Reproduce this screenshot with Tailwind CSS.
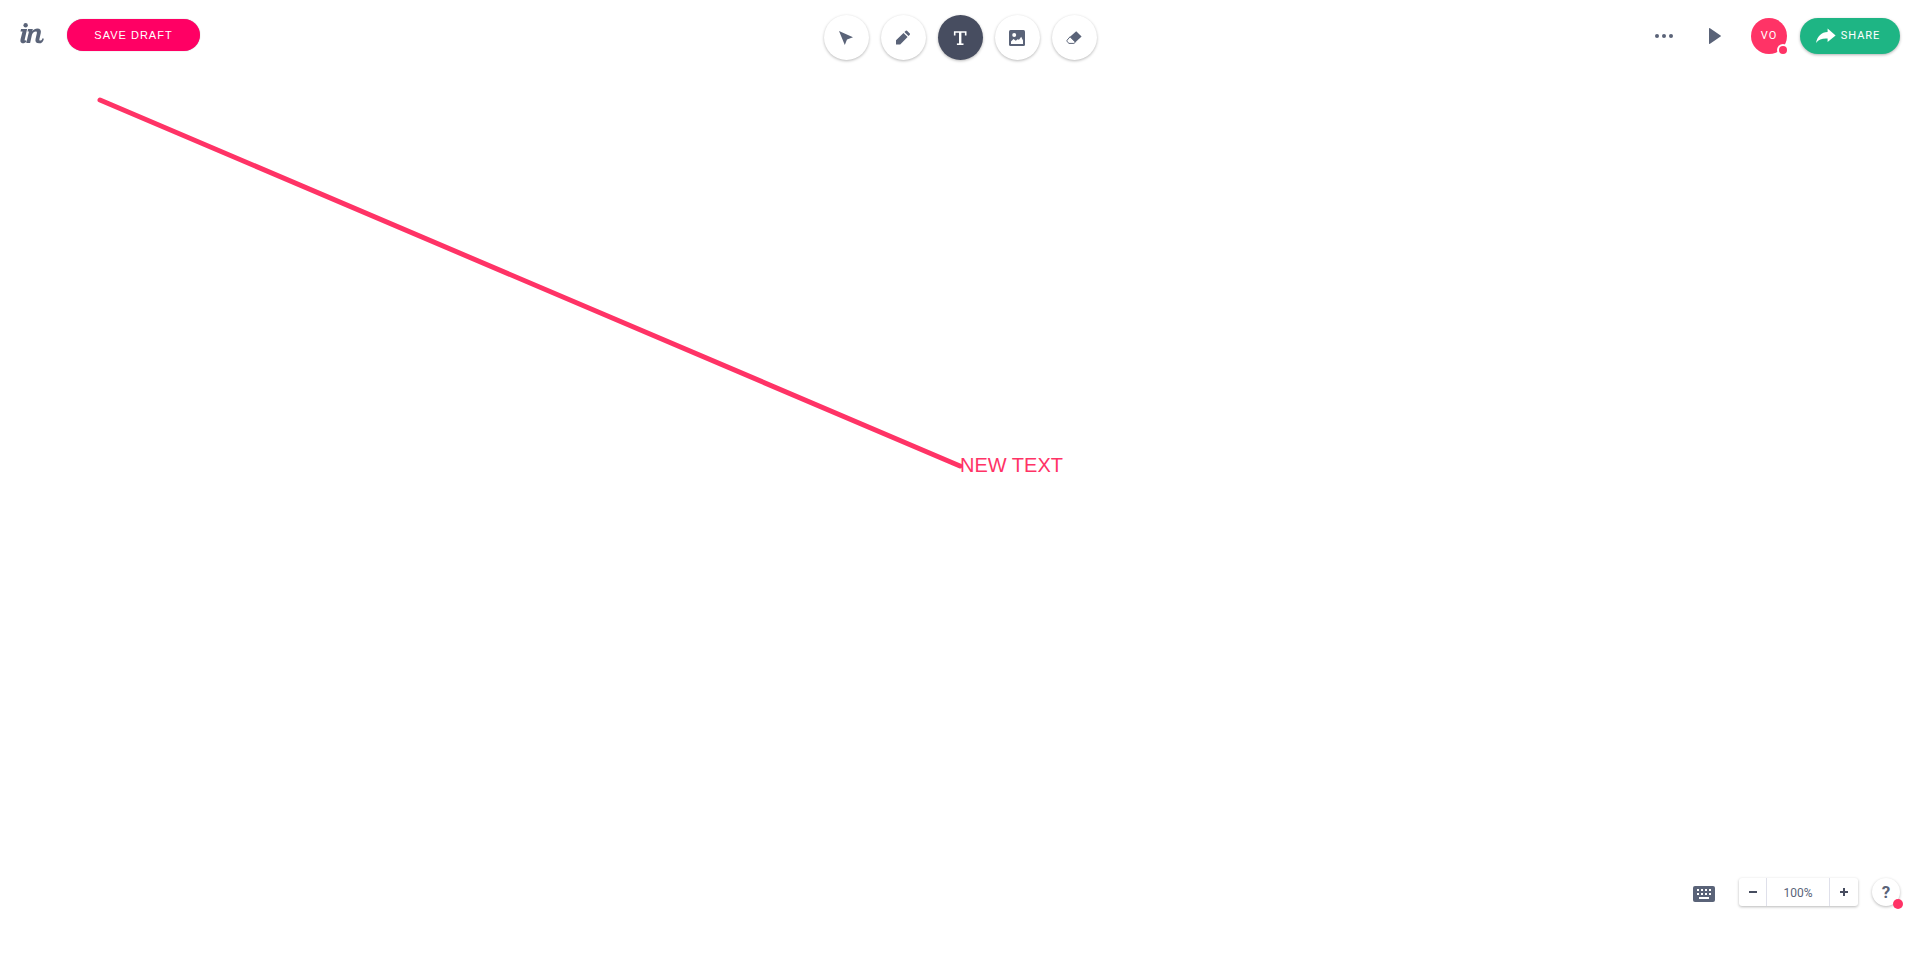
<!DOCTYPE html>
<html lang="en">
<head>
<meta charset="utf-8">
<title>Freehand</title>
<script src="https://cdn.jsdelivr.net/npm/@tailwindcss/browser@4"></script>
</head>
<body class="relative flex min-h-screen flex-col justify-between overflow-hidden bg-white font-['Roboto',sans-serif] text-[#5a6378]">
  <!-- Canvas -->
  <main class="absolute inset-0" aria-label="Canvas">
    <svg class="absolute top-0 left-0 overflow-visible" width="960" height="466" fill="none"><path d="M100 100L960 466" stroke="#ff3366" stroke-width="5" stroke-linecap="round"/></svg>
    <p class="absolute top-[453px] left-[960px] font-['Liberation_Sans',sans-serif] text-[20px] leading-6 whitespace-nowrap text-[#ff3366]">NEW TEXT</p>
  </main>

  <header class="relative grid grid-cols-[1fr_auto_1fr] items-start px-5 pt-[15px]">
    <div class="flex items-center gap-[23px] pt-1">
      <a href="#" aria-label="Home">
        <svg class="mb-[3px] block" width="24" height="21" viewBox="0 0 23 20" preserveAspectRatio="none" fill="#5a6378"><circle cx="5.4" cy="2.1" r="2.1"/><path d="M.5 8L1 5.8H6.8L4.6 15.2C4.3 16.6 4.6 17 5.6 16.4L6.4 17.4C4.8 19.3 3 19.8 1.6 19.1C.3 18.4.2 17 .6 15.3L2.4 8Z"/><path d="M7.2 8L7.7 5.8H12.3L11.8 7.8C13 6.2 14.8 5.3 16.6 5.3C19.4 5.3 20.5 7 19.9 9.6L18.6 15.2C18.3 16.5 18.7 17 19.8 16.7C20.8 16.4 21.2 15.7 21.6 14.5L22.9 14.9C22.3 17.6 20.7 19.4 18.3 19.4C15.5 19.4 14.3 17.8 14.9 15.2L16.1 10C16.4 8.6 16.1 8 15.2 8C13.4 8 11.8 9.6 11.4 11.5L9.7 19.1H6L8.6 8Z"/></svg>
      </a>
      <button class="h-8 w-[133px] rounded-full bg-[#ff0064] font-['Liberation_Sans',sans-serif] text-[11px] leading-4 tracking-[1px] whitespace-nowrap text-white shadow-[0_0_1px_rgba(0,0,0,0.4)]">SAVE DRAFT</button>
    </div>

    <nav class="flex gap-3" aria-label="Tools">
      <button aria-label="Select" class="flex size-[45px] items-center justify-center rounded-full bg-white shadow-[0_1px_3px_rgba(0,0,0,0.28)]">
        <svg width="16" height="16" viewBox="0 0 16 16" fill="#5a6378"><path d="M1 1L15 7.2L9 9.4L6.8 15Z"/></svg>
      </button>
      <button aria-label="Draw" class="flex size-[45px] items-center justify-center rounded-full bg-white shadow-[0_1px_3px_rgba(0,0,0,0.28)]">
        <svg width="16" height="16" viewBox="0 0 16 16" fill="#5a6378"><path d="M1 10.3L8.5 3L12.6 7L5.2 14.6H1ZM9.4 2L10.8.8Q11.4.3 12 .8L14.8 3.6Q15.3 4.2 14.8 4.8L13.5 6.1Z"/></svg>
      </button>
      <button aria-label="Text" aria-pressed="true" class="flex size-[45px] items-center justify-center rounded-full bg-[#474d60] shadow-[0_1px_3px_rgba(0,0,0,0.28)]">
        <svg width="16" height="16" viewBox="0 0 16 16" fill="none" stroke="#fff"><path d="M2.7 5.5V2H13.7V5.5" stroke-width="1.6"/><path d="M8.2 2V14" stroke-width="2.4"/><path d="M4.9 14.2H11.5" stroke-width="1.6"/></svg>
      </button>
      <button aria-label="Image" class="flex size-[45px] items-center justify-center rounded-full bg-white shadow-[0_1px_3px_rgba(0,0,0,0.28)]">
        <svg width="16" height="16" viewBox="0 0 16 16"><rect width="16" height="16" rx="1.5" fill="#5a6378"/><circle cx="5.2" cy="5" r="2" fill="#fff"/><path d="M2 14V11.5L4.5 9L6.8 10.8L8.6 9.2L10 9.8L12.2 6.8L14 10.5V14Z" fill="#fff"/></svg>
      </button>
      <button aria-label="Erase" class="flex size-[45px] items-center justify-center rounded-full bg-white shadow-[0_1px_3px_rgba(0,0,0,0.28)]">
        <svg width="16" height="16" viewBox="0 0 16 16"><path d="M4 6.8L10.2 1.2L15.6 6.4L9.4 12.2Z" fill="#5a6378"/><path d="M4 6.8L1.1 10.2Q.5 11 1.2 11.7L3 13.4H7.9L9.4 12.2Z" fill="#fff" stroke="#5a6378" stroke-width="1"/></svg>
      </button>
    </nav>

    <div class="flex items-center justify-end pt-[3px]">
      <button aria-label="More" class="mr-9 flex h-9 items-center">
        <svg width="18" height="4" viewBox="0 0 18 4" fill="#5a6378"><circle cx="2" cy="2" r="2"/><circle cx="9" cy="2" r="2"/><circle cx="16" cy="2" r="2"/></svg>
      </button>
      <button aria-label="Present" class="mr-[30px] flex h-9 items-center">
        <svg width="12" height="16" viewBox="0 0 12 16" fill="#5a6378"><path d="M0 .8Q0-.4 1 .3L11.6 7.4Q12.3 8 11.6 8.6L1 15.7Q0 16.4 0 15.2Z"/></svg>
      </button>
      <button class="relative mr-[13px] size-9 overflow-hidden">
        <span class="flex size-9 items-center justify-center rounded-full bg-[#ff3366] text-[11px] tracking-[1px] text-white">VO</span>
        <span class="absolute -right-[2px] -bottom-[2px] size-3 rounded-full bg-white"></span>
        <span class="absolute right-0 bottom-0 size-2 rounded-full bg-[#ff3366]"></span>
      </button>
      <button class="flex h-9 w-[100px] items-center justify-center gap-[5px] rounded-full bg-[#1eb584] pr-1 text-[11px] tracking-[1px] text-white shadow-[0_1px_3px_rgba(0,0,0,0.3)]">
        <svg width="20" height="16" viewBox="0 0 20 16" fill="#fff"><path d="M0 15C1.5 8 5.5 4.3 11.6 4V.6L19.6 7.4L11.6 14V10.6C6.5 10.3 3 11.2 0 15Z"/></svg>
        SHARE
      </button>
    </div>
  </header>

  <footer class="relative flex items-center justify-end px-5 pb-[61px]">
    <button aria-label="Keyboard shortcuts" class="mr-6 pt-1">
      <svg class="block" width="22" height="16" viewBox="0 0 22 16"><rect width="22" height="16" rx="2" fill="#5a6378"/><path d="M4 4H18M4 8H18" stroke="#fff" stroke-width="2" stroke-dasharray="2 2"/><path d="M6 12H16" stroke="#fff" stroke-width="2"/></svg>
    </button>
    <div class="mr-[14px] flex h-7 divide-x divide-[#dfe0ea] rounded-[3px] bg-white shadow-[0_1px_3px_rgba(0,0,0,0.28)]">
      <button aria-label="Zoom out" class="flex w-7 items-center justify-center"><svg width="8" height="8"><path d="M0 4H8" stroke="#474d60" stroke-width="2"/></svg></button>
      <button class="w-[63px] pt-px text-center text-[12px]">100%</button>
      <button aria-label="Zoom in" class="flex w-7 items-center justify-center"><svg width="8" height="8"><path d="M0 4H8M4 0V8" stroke="#474d60" stroke-width="2"/></svg></button>
    </div>
    <button aria-label="Help" class="relative size-7 rounded-full bg-white text-[17px] leading-7 font-bold shadow-[0_1px_3px_rgba(0,0,0,0.28)]">?<span class="absolute -right-[3px] -bottom-[3px] size-[10px] rounded-full bg-[#ff3366]"></span></button>
  </footer>
</body>
</html>
